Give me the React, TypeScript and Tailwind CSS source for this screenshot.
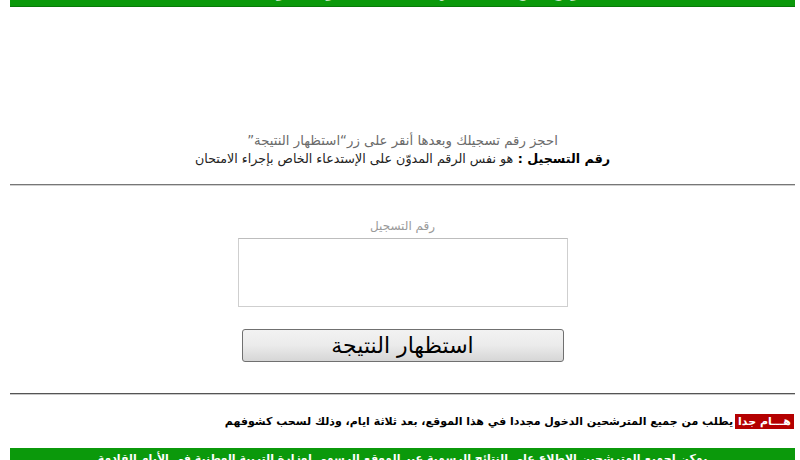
import React from 'react'

const arabic = { fontFamily: '"DejaVu Sans", "Liberation Sans", sans-serif' }

export default function App() {
  return (
    <div dir="rtl" className="w-[800px] h-[460px] overflow-hidden bg-white" style={arabic}>
      <div className="ml-[10px] mr-[5px]">
        {/* top banner, page is scrolled so only its lower edge shows */}
        <div className="-mt-[22px] h-[29px] bg-[#0b990b] border-b border-[#087a08] flex items-center justify-center text-white font-bold text-[14px]">
          موقع نتائج امتحان شهادة التعليم المتوسط دورة 2015
        </div>

        <div className="h-[125px]" />

        <div className="flex flex-col items-center text-[12.7px] leading-[18px]">
          <p className="text-[#6b6b6b] text-[13.3px]">احجز رقم تسجيلك وبعدها أنقر على زر“استظهار النتيجة”</p>
          <p className="text-[#222]">
            <span className="font-bold text-black">رقم التسجيل : </span>
            هو نفس الرقم المدوّن على الإستدعاء الخاص بإجراء الامتحان
          </p>
        </div>

        <div className="mt-[16px] h-[2px] border-t border-[#777] border-b border-b-[#d0d0d0]" />

        <div className="mt-[32px] flex flex-col items-center">
          <label className="text-[12px] text-[#9a9a9a] leading-[16px]">رقم التسجيل</label>
          <div className="mt-[4px] w-[330px] h-[69px] border border-[#cfcfcf] border-t-[#bdbdbd] bg-white" />
          <button
            type="button"
            className="mt-[22px] w-[322px] h-[33px] rounded-[3px] border border-[#707070] bg-gradient-to-b from-[#f2f2f2] via-[#ebebeb] to-[#d6d6d6] text-[22px] text-black leading-none"
          >
            استظهار النتيجة
          </button>
        </div>

        <div className="mt-[31px] h-[2px] border-t border-[#555] border-b border-b-[#c8c8c8]" />

        <div className="mt-[19px] flex items-center text-[11px] font-bold text-black leading-[15px]">
          <span className="bg-[#b40000] text-white px-[3px] mr-[1px]">هـــام جدا</span>
          <span className="mr-[2px]">يطلب من جميع المترشحين الدخول مجددا في هذا الموقع، بعد ثلاثة ايام، وذلك لسحب كشوفهم</span>
        </div>

        <div className="mt-[19px] h-[24px] bg-[#0b990b] flex items-start justify-center pt-[3px] text-white font-bold text-[11px] whitespace-nowrap overflow-hidden">
          يمكن لجميع المترشحين الإطلاع على النتائج الرسمية عبر الموقع الرسمي لوزارة التربية الوطنية في الأيام القادمة
        </div>
      </div>
    </div>
  )
}
